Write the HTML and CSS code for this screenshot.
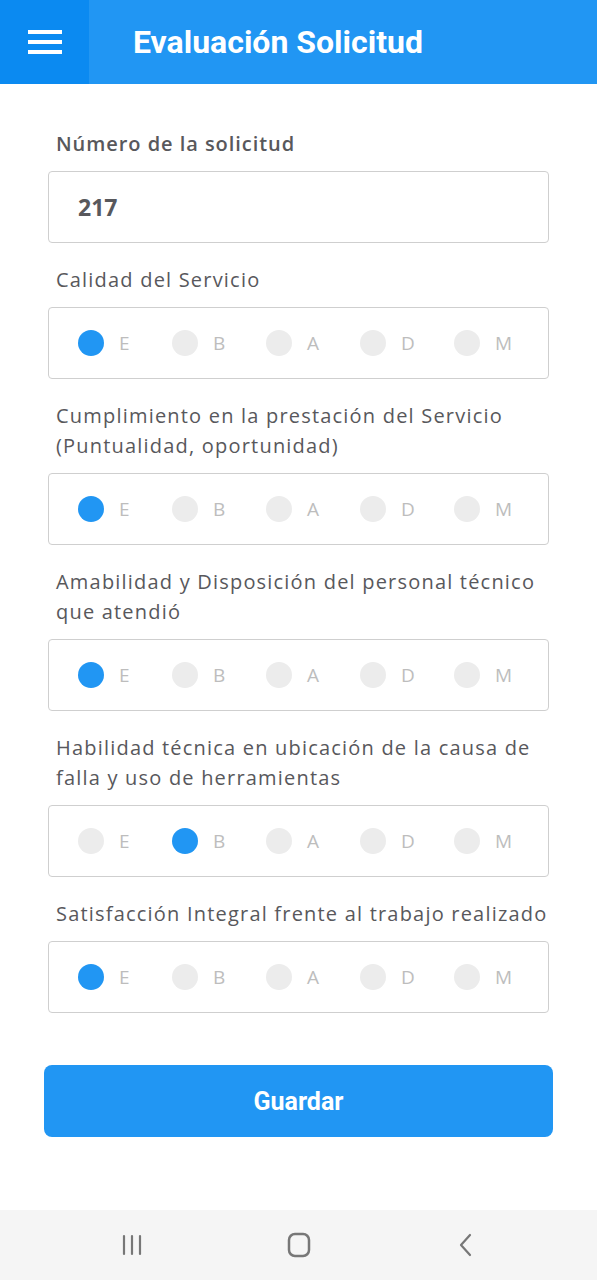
FILE: index.html
```html
<!DOCTYPE html>
<html lang="es">
<head>
  <meta charset="UTF-8" />
  <meta name="viewport" content="width=device-width, initial-scale=1" />
  <title>Evaluación Solicitud</title>
  <link rel="stylesheet" href="styles.css">
</head>
<body>
  <header class="topbar">
    <div class="menu-btn">
      <span></span><span></span><span></span>
    </div>
    <h1>Evaluación Solicitud</h1>
  </header>

  <main class="content">
    <label class="field-label strong">Número de la solicitud</label>
    <div class="box input-box">217</div>

    <label class="field-label">Calidad del Servicio</label>
    <div class="box radios">
      <div class="opt on"><i></i>E</div>
      <div class="opt"><i></i>B</div>
      <div class="opt"><i></i>A</div>
      <div class="opt"><i></i>D</div>
      <div class="opt"><i></i>M</div>
    </div>

    <label class="field-label">Cumplimiento en la prestación del Servicio (Puntualidad, oportunidad)</label>
    <div class="box radios">
      <div class="opt on"><i></i>E</div>
      <div class="opt"><i></i>B</div>
      <div class="opt"><i></i>A</div>
      <div class="opt"><i></i>D</div>
      <div class="opt"><i></i>M</div>
    </div>

    <label class="field-label">Amabilidad y Disposición del personal técnico que atendió</label>
    <div class="box radios">
      <div class="opt on"><i></i>E</div>
      <div class="opt"><i></i>B</div>
      <div class="opt"><i></i>A</div>
      <div class="opt"><i></i>D</div>
      <div class="opt"><i></i>M</div>
    </div>

    <label class="field-label">Habilidad técnica en ubicación de la causa de falla y uso de herramientas</label>
    <div class="box radios">
      <div class="opt"><i></i>E</div>
      <div class="opt on"><i></i>B</div>
      <div class="opt"><i></i>A</div>
      <div class="opt"><i></i>D</div>
      <div class="opt"><i></i>M</div>
    </div>

    <label class="field-label">Satisfacción Integral frente al trabajo realizado</label>
    <div class="box radios">
      <div class="opt on"><i></i>E</div>
      <div class="opt"><i></i>B</div>
      <div class="opt"><i></i>A</div>
      <div class="opt"><i></i>D</div>
      <div class="opt"><i></i>M</div>
    </div>

    <button class="save" type="button">Guardar</button>
  </main>

  <nav class="sysbar">
    <span class="nav-icon">
      <svg width="20" height="22" viewBox="0 0 20 22" fill="none" stroke="#777" stroke-width="2.2" stroke-linecap="round">
        <line x1="2" y1="2" x2="2" y2="20" />
        <line x1="10" y1="2" x2="10" y2="20" />
        <line x1="18" y1="2" x2="18" y2="20" />
      </svg>
    </span>
    <span class="nav-icon">
      <svg width="24" height="26" viewBox="0 0 24 26" fill="none" stroke="#777" stroke-width="2.5">
        <rect x="2" y="2" width="20" height="22" rx="6" />
      </svg>
    </span>
    <span class="nav-icon">
      <svg width="16" height="24" viewBox="0 0 16 24" fill="none" stroke="#777" stroke-width="2.2" stroke-linecap="round" stroke-linejoin="round">
        <polyline points="12,2 3,12 12,22" />
      </svg>
    </span>
  </nav>
</body>
</html>
```

FILE: styles.css
```css
body {
  margin: 0;
  height: 1280px;
  display: flex;
  flex-direction: column;
  background: #fff;
  font-family: 'Open Sans', sans-serif;
  color: #58585c;
}
.topbar {
  height: 84px;
  background: #2196f3;
  display: flex;
  align-items: center;
}
.menu-btn {
  width: 89px;
  height: 84px;
  background: #0b8af1;
  display: flex;
  flex-direction: column;
  justify-content: center;
  gap: 6px;
  padding-left: 28px;
  box-sizing: border-box;
}
.menu-btn span {
  display: block;
  width: 34px;
  height: 4px;
  background: #fff;
}
.topbar h1 {
  margin: 0 0 0 44px;
  font-family: Roboto, sans-serif;
  font-weight: 700;
  font-size: 32px;
  color: #fff;
}
.content {
  flex: 1;
  padding: 45px 48px 0;
  display: flex;
  flex-direction: column;
}
.field-label {
  display: block;
  font-size: 20px;
  letter-spacing: 1.2px;
  line-height: 30px;
  padding: 0 0 0 8px;
  margin-top: 22px;
}
.field-label.strong {
  margin-top: 0;
  font-weight: 600;
  letter-spacing: 0.95px;
}
.box {
  margin-top: 12px;
  height: 72px;
  box-sizing: border-box;
  border: 1px solid #cfcfcf;
  border-radius: 4px;
}
.input-box {
  display: flex;
  align-items: center;
  padding-left: 29px;
  font-size: 23px;
  font-weight: 700;
  color: #58585c;
}
.radios {
  display: flex;
  align-items: center;
  padding-left: 29px;
}
.opt {
  width: 94px;
  display: flex;
  align-items: center;
  gap: 15px;
  font-size: 19px;
  color: #bdbdbd;
}
.opt i {
  width: 26px;
  height: 26px;
  border-radius: 50%;
  background: #ececec;
}
.opt.on i {
  background: #2196f3;
}
.save {
  margin: 52px -4px 0;
  height: 72px;
  border: none;
  border-radius: 8px;
  background: #2196f3;
  color: #fff;
  font-family: Roboto, sans-serif;
  font-weight: 700;
  font-size: 25px;
}
.sysbar {
  height: 70px;
  background: #f5f5f5;
  display: flex;
  align-items: center;
  justify-content: center;
  gap: 127px;
}
.nav-icon {
  width: 40px;
  display: flex;
  justify-content: center;
}
```
